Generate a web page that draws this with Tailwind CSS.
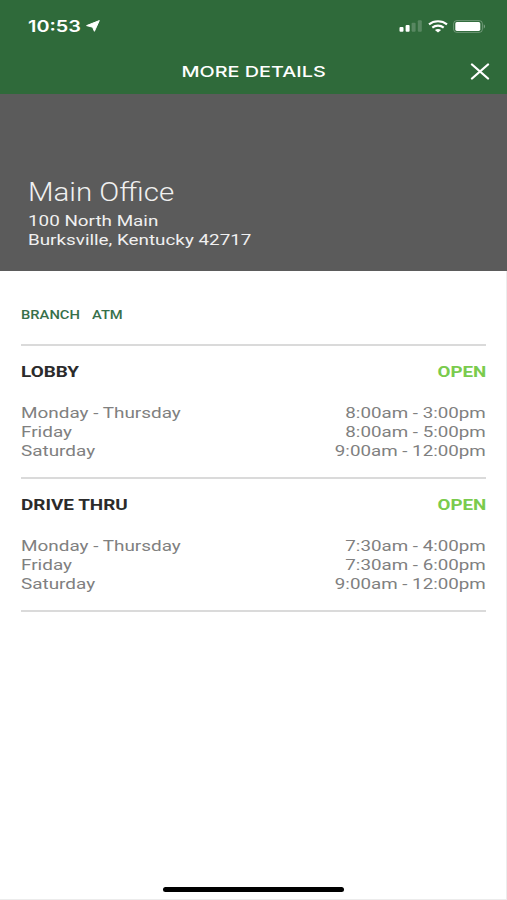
<!DOCTYPE html>
<html lang="en">
<head>
    <meta charset="UTF-8">
    <meta name="viewport" content="width=device-width, initial-scale=1.0">
    <title>More Details</title>
    <script src="https://cdn.jsdelivr.net/npm/@tailwindcss/browser@4"></script>
</head>
<body class="bg-white font-['Roboto',sans-serif]">
    <div class="flex flex-col h-[900px] w-[507px] overflow-hidden border-b border-[#ececec]">
        <header class="h-[94px] shrink-0 bg-[#2f6a3a] text-white">
            <!-- Status bar -->
            <div class="flex items-center justify-between h-[52px] pl-[28px] pr-[21px]">
                <div class="flex items-center font-['Inter',sans-serif]">
                    <span class="w-[58px] text-[16px] leading-[20px] font-semibold whitespace-nowrap origin-left scale-x-[1.24]">10:53</span>
                    <svg class="w-[14px] h-[12px]" viewBox="0 0 14 12" fill="#fff" stroke="#fff" stroke-width="1" stroke-linejoin="round"><path d="M13.3 0.6 L8.4 11.3 L6.6 7.2 L0.6 5.6 Z"/></svg>
                </div>
                <div class="flex items-center">
                    <svg class="w-[24px] h-[12px]" viewBox="0 0 24 12" fill="#fff">
                        <rect x="0.5" y="7" width="4" height="4.8" rx="1"/>
                        <rect x="6.6" y="5" width="4" height="6.8" rx="1"/>
                        <rect x="12.6" y="2.7" width="4" height="9.1" rx="1" opacity=".2"/>
                        <rect x="18.8" y="0.2" width="4" height="11.6" rx="1" opacity=".2"/>
                    </svg>
                    <svg class="ml-[5px] w-[20px] h-[13px]" viewBox="0 0 20 13" fill="none" stroke="#fff" stroke-width="2.1">
                        <path d="M1 4.4 C6 0.2 14 0.2 19 4.4"/>
                        <path d="M4.3 7.6 C7.6 4.9 12.4 4.9 15.7 7.6"/>
                        <path d="M10 12.4 L6.9 10 C8.6 8.5 11.4 8.5 13.1 10 Z" fill="#fff" stroke="none"/>
                    </svg>
                    <svg class="ml-[5px] w-[33px] h-[13px]" viewBox="0 0 33 13">
                        <rect x="0.6" y="0.6" width="28.8" height="11.8" rx="3.2" fill="none" stroke="#fff" stroke-opacity=".3"/>
                        <rect x="2.3" y="2.1" width="25" height="8.8" rx="1.6" fill="#fff"/>
                        <path d="M30.8 4.3 Q33 6.5 30.8 8.7 Z" fill="#fff" opacity=".45"/>
                    </svg>
                </div>
            </div>
            <!-- Title bar -->
            <div class="grid grid-cols-[1fr_auto_1fr] items-center h-[39px]">
                <span></span>
                <h1 class="text-[15px] leading-[20px] font-medium font-['Inter',sans-serif] whitespace-nowrap scale-x-[1.32]">MORE DETAILS</h1>
                <svg class="justify-self-end mr-[17px] w-[20px] h-[17px]" viewBox="0 0 20 17" fill="none" stroke="#fff" stroke-width="2.3" stroke-linecap="round"><path d="M2 1.5 L18 15.5 M18 1.5 L2 15.5"/></svg>
            </div>
        </header>

        <section class="h-[177px] shrink-0 bg-[#5b5b5b] pt-[84px] pl-[28px] text-[#f0f0f0]">
            <h2 class="w-fit text-[25px] leading-[30px] font-light whitespace-nowrap origin-left scale-x-[1.18]">Main Office</h2>
            <div class="pt-[4px] text-[15.5px] leading-[19px]">
                <p class="w-fit whitespace-nowrap origin-left scale-x-[1.215]">100 North Main</p>
                <p class="w-fit whitespace-nowrap origin-left scale-x-[1.215]">Burksville, Kentucky 42717</p>
            </div>
        </section>

        <main class="grow pl-[21px] pr-[20px] pt-[34px] border-r border-[#ececec]">
            <div class="flex h-[39px] text-[12.5px] leading-[19px] font-medium text-[#37704a]">
                <span class="w-[70.5px] whitespace-nowrap origin-left scale-x-[1.18]">BRANCH</span>
                <span class="whitespace-nowrap origin-left scale-x-[1.18]">ATM</span>
            </div>

            <section class="h-[133px] border-t-2 border-[#dadada] pt-[17px] text-[15.5px] leading-[19px] text-[#808080]">
                <div class="flex justify-between pb-[22px] font-bold">
                    <h3 class="text-[#2b2b2b] whitespace-nowrap origin-left scale-x-[1.22]">LOBBY</h3>
                    <span class="text-[#7acb4d] origin-right scale-x-[1.21]">OPEN</span>
                </div>
                <div class="flex justify-between whitespace-nowrap">
                    <div class="origin-left scale-x-[1.22]"><p>Monday - Thursday</p><p>Friday</p><p>Saturday</p></div>
                    <div class="text-right origin-right scale-x-[1.21]"><p>8:00am - 3:00pm</p><p>8:00am - 5:00pm</p><p>9:00am - 12:00pm</p></div>
                </div>
            </section>

            <section class="h-[135px] border-y-2 border-[#dadada] pt-[17px] text-[15.5px] leading-[19px] text-[#808080]">
                <div class="flex justify-between pb-[22px] font-bold">
                    <h3 class="text-[#2b2b2b] whitespace-nowrap origin-left scale-x-[1.22]">DRIVE THRU</h3>
                    <span class="text-[#7acb4d] origin-right scale-x-[1.21]">OPEN</span>
                </div>
                <div class="flex justify-between whitespace-nowrap">
                    <div class="origin-left scale-x-[1.22]"><p>Monday - Thursday</p><p>Friday</p><p>Saturday</p></div>
                    <div class="text-right origin-right scale-x-[1.21]"><p>7:30am - 4:00pm</p><p>7:30am - 6:00pm</p><p>9:00am - 12:00pm</p></div>
                </div>
            </section>
        </main>

        <!-- Home indicator -->
        <div class="flex justify-center shrink-0 h-[12px] border-r border-[#ececec]">
            <div class="w-[181px] h-[5px] rounded-full bg-black"></div>
        </div>
    </div>
</body>
</html>
